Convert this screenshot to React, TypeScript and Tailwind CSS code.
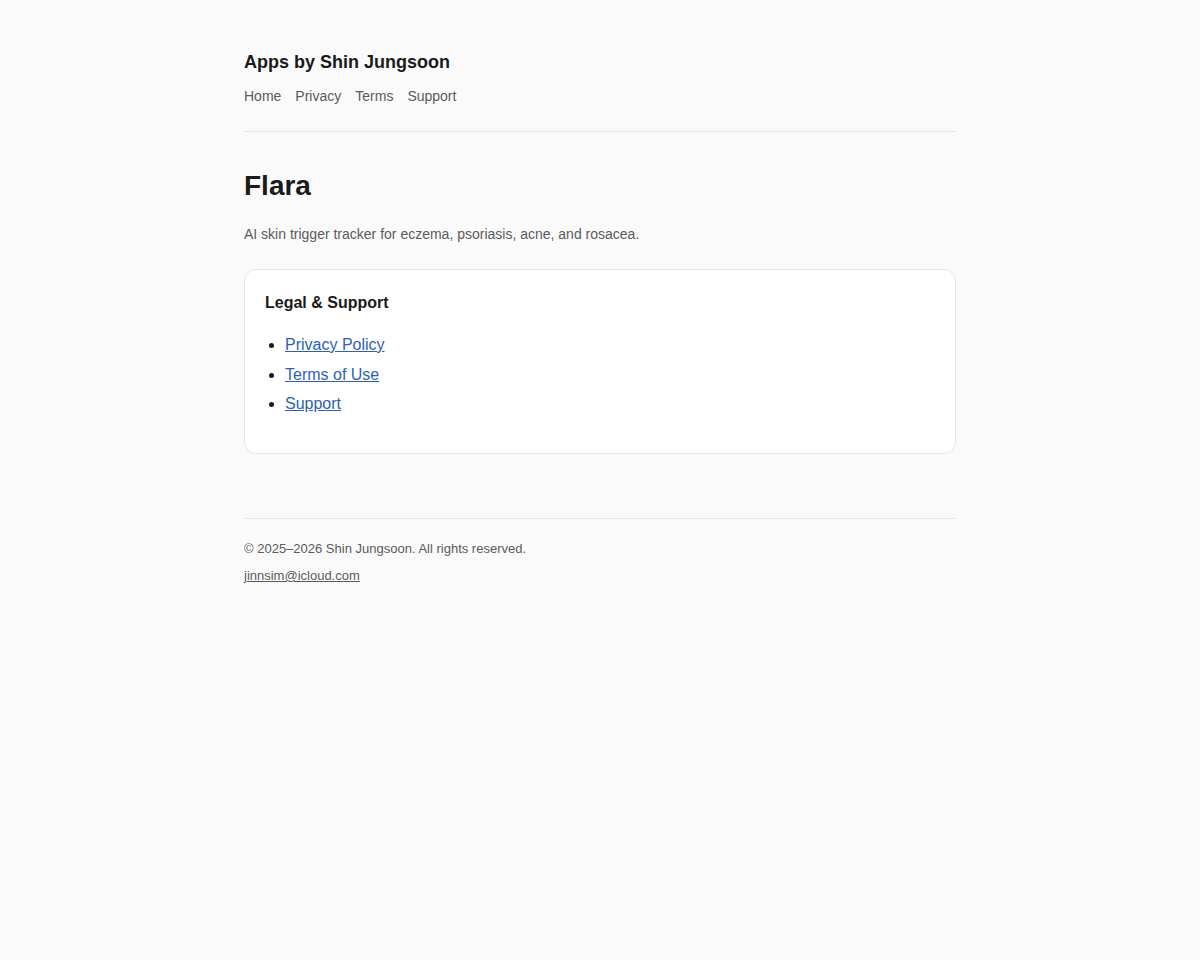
const NAV = ["Home", "Privacy", "Terms", "Support"];
const LINKS = ["Privacy Policy", "Terms of Use", "Support"];

export default function App() {
  return (
    <div className="min-h-screen bg-[#fafafa] text-[#1a1a1a] font-['Liberation_Sans',Arial,sans-serif]">
      <div className="max-w-[760px] mx-auto px-6">
        <header className="pt-[49px] pb-6 border-b border-[#e5e5e5]">
          <div className="text-[18px] leading-[27px] font-bold">Apps by Shin Jungsoon</div>
          <nav className="mt-2.5 flex gap-[14px] text-[14px] leading-[21px] text-[#5a5a5a]">
            {NAV.map((item) => (
              <a key={item} href="#">
                {item}
              </a>
            ))}
          </nav>
        </header>

        <main className="pt-[37px]">
          <h1 className="text-[28px] leading-[34px] font-bold">Flara</h1>
          <p className="mt-[21px] text-[14px] leading-[21px] text-[#5a5a5a]">
            AI skin trigger tracker for eczema, psoriasis, acne, and rosacea.
          </p>

          <section className="mt-6 bg-white border border-[#e6e6e6] rounded-xl px-5 pt-[21px] pb-[19px]">
            <h2 className="text-[16px] leading-6 font-bold">Legal &amp; Support</h2>
            <ul className="mt-[18px] mb-[18px] pl-5 list-disc space-y-[5.5px] text-[16px] leading-6">
              {LINKS.map((link) => (
                <li key={link}>
                  <a href="#" className="text-[#2c5fb8] underline">
                    {link}
                  </a>
                </li>
              ))}
            </ul>
          </section>
        </main>

        <footer className="mt-16 pt-5 border-t border-[#e5e5e5] text-[13px] leading-[19px] text-[#5a5a5a]">
          <p>© 2025–2026 Shin Jungsoon. All rights reserved.</p>
          <p className="mt-2">
            <a href="#" className="underline">
              jinnsim@icloud.com
            </a>
          </p>
        </footer>
      </div>
    </div>
  );
}
